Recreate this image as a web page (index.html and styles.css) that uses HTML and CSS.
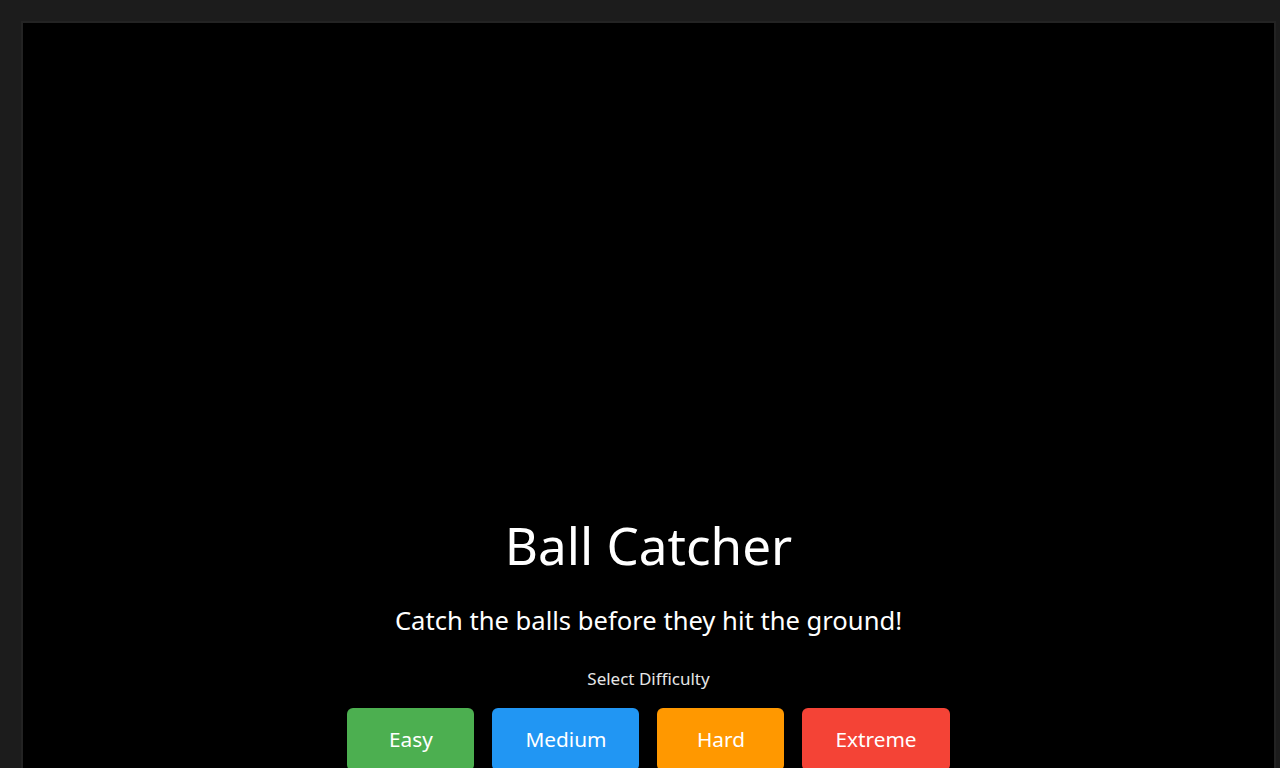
FILE: index.html
```html
<!DOCTYPE html>
<html>
<head>
<meta charset="utf-8">
<link rel="stylesheet" href="styles.css">
</head>
<body>
<div class="frame">
  <div class="menu">
    <h1 class="title">Ball Catcher</h1>
    <p class="subtitle">Catch the balls before they hit the ground!</p>
    <p class="label">Select Difficulty</p>
    <div class="buttons">
      <button class="btn easy">Easy</button>
      <button class="btn medium">Medium</button>
      <button class="btn hard">Hard</button>
      <button class="btn extreme">Extreme</button>
    </div>
  </div>
</div>
</body>
</html>
```
FILE: styles.css
```css
html, body {
  margin: 0;
  padding: 0;
  background: #1c1c1c;
  overflow: hidden;
  font-family: "Noto Sans", "Open Sans", sans-serif;
}
.frame {
  margin: 21px 0 0 21px;
  width: 1255px;
  height: 900px;
  box-sizing: border-box;
  background: #000;
  border: 2px solid #232323;
}
.menu {
  display: flex;
  flex-direction: column;
  align-items: center;
  padding-top: 487px;
  color: #fff;
}
.title {
  margin: 0;
  font-size: 51.2px;
  font-weight: 400;
  line-height: 70px;
}
.subtitle {
  margin: 23px 0 0;
  font-size: 25.6px;
  line-height: 35px;
}
.label {
  margin: 29px 0 0;
  font-size: 17px;
  line-height: 23px;
  color: #e6e6e6;
}
.buttons {
  display: flex;
  gap: 18px;
  margin-top: 18px;
}
.btn {
  font-family: "Noto Sans", "Open Sans", sans-serif;
  font-size: 20.8px;
  line-height: 29px;
  color: #fff;
  border: none;
  border-radius: 6px;
  padding: 17px 33px;
  min-width: 127px;
  box-sizing: border-box;
}
.easy { background: #4caf50; }
.medium { background: #2196f3; }
.hard { background: #ff9800; }
.extreme { background: #f44336; }
```
